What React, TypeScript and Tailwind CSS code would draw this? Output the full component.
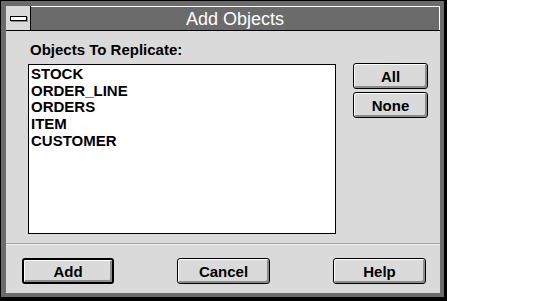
// App.tsx - "Add Objects" dialog (Windows 3.x style)
const FONT = { fontFamily: '"Liberation Sans", Arial, sans-serif' };

const OBJECTS = ['STOCK', 'ORDER_LINE', 'ORDERS', 'ITEM', 'CUSTOMER'];

function Win3Button({ label, width, isDefault }: { label: string; width: string; isDefault?: boolean }) {
  return (
    <button
      className={`${width} h-[26px] flex items-center justify-center rounded-[3px] bg-[#dadada] text-[15px] font-bold text-black leading-none shadow-[inset_1px_1px_0_#ffffff,inset_-2px_-2px_0_#8c8c8c] ${
        isDefault ? 'border-2 border-black' : 'border border-black'
      }`}
    >
      {label}
    </button>
  );
}

export default function App() {
  return (
    <div className="w-[536px] h-[301px] bg-white overflow-hidden" style={FONT}>
      {/* outer black edge + shadow */}
      <div className="w-[447px] h-[301px] bg-black pt-px pl-px pr-[3px] pb-[4px]">
        {/* window frame */}
        <div className="w-full h-full bg-[#6b6b6b] pt-[5px] pl-[5px] pr-[4px] pb-[4px]">
          <div className="w-full h-full flex flex-col bg-[#dadada]">
            {/* title bar */}
            <div className="flex h-[25px] border-b border-black">
              <div className="w-[25px] h-full flex items-center justify-center bg-[#dadada] border-r border-black">
                <div className="w-[17px] h-[5px] border border-black bg-white shadow-[1px_1px_0_#8c8c8c]" />
              </div>
              <div className="flex-1 flex items-center justify-center bg-[#6b6b6b] border-t border-r border-white text-white text-[18px] leading-none">
                Add Objects
              </div>
            </div>

            {/* body */}
            <div className="flex-1 flex flex-col">
              <div className="pt-[10px] pl-[24px] text-[15px] font-bold leading-[17px] text-black">
                Objects To Replicate:
              </div>

              <div className="flex mt-[6px] pl-[22px]">
                <div className="w-[308px] h-[170px] border border-black bg-white pt-px pl-[2px]">
                  {OBJECTS.map(o => (
                    <div key={o} className="text-[15px] font-bold leading-[16.7px] text-black">
                      {o}
                    </div>
                  ))}
                </div>
                <div className="flex flex-col gap-[3px] ml-[17px] -mt-px">
                  <Win3Button label="All" width="w-[75px]" />
                  <Win3Button label="None" width="w-[75px]" />
                </div>
              </div>

              <div className="mt-[9px] border-t border-[#a4a4a4] border-b border-b-[#f0f0f0]" />

              <div className="flex mt-[13px] pl-[16px]">
                <Win3Button label="Add" width="w-[92px]" isDefault />
                <div className="ml-[63px]">
                  <Win3Button label="Cancel" width="w-[93px]" />
                </div>
                <div className="ml-[63px]">
                  <Win3Button label="Help" width="w-[93px]" />
                </div>
              </div>
            </div>
          </div>
        </div>
      </div>
    </div>
  );
}
